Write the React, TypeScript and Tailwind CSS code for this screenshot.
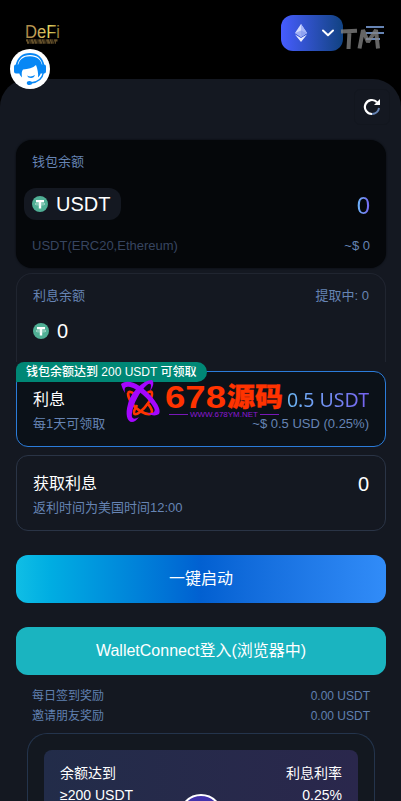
import type { ReactNode } from "react"

function TetherIcon() {
  return (
    <svg width="16" height="16" viewBox="0 0 16 16" className="shrink-0">
      <circle cx="8" cy="8" r="8" fill="#50af95" />
      <path d="M4 4h8v2.200H9.200v6.300H6.800V6.200H4z" fill="#fff" />
      <ellipse cx="8" cy="8" rx="5" ry="1" fill="none" stroke="#d5eee6" strokeWidth="0.6" />
    </svg>
  )
}

function SupportIcon() {
  return (
    <svg width="40" height="40" viewBox="0 0 40 40">
      <circle cx="20" cy="20" r="20" fill="#fff" />
      <path d="M6.500 17C7.500 9 13 5 20 5s12.500 4 13.500 12" fill="none" stroke="#0787f5" strokeWidth="1.800" />
      <path d="M4 17.500q0-2 2-2h3v9H6q-2 0-2-2zM36 17.500q0-2-2-2h-3v9h3q2 0 2-2z" fill="#0787f5" />
      <path d="M8 17C9 10.500 13 7.200 20 7.200s12 4 12 10.300c0 5-1 8-4 11 .500-4-.500-8.500-2-12.500-3 3-8 4-13 4.500-1.500 2-1.500 4-1 8C9 26 8 22 8 17z" fill="#0787f5" />
      <path d="M17 26.500q4 2 8-.500-1 3-4 3t-4-2.500z" fill="#0787f5" />
      <path d="M33.500 23c-1 6.500-5.500 10.500-13 11" fill="none" stroke="#0787f5" strokeWidth="1.500" />
      <ellipse cx="19.500" cy="34" rx="2.700" ry="2.100" fill="#0787f5" />
    </svg>
  )
}

function Logo() {
  return (
    <svg width="38" height="24" viewBox="0 0 38 24">
      <defs>
        <linearGradient id="gold" x1="0" y1="0" x2="1" y2="0">
          <stop offset="0" stopColor="#a88545" />
          <stop offset="0.35" stopColor="#c5a45a" />
          <stop offset="0.7" stopColor="#e6d75f" />
          <stop offset="1" stopColor="#8b7133" />
        </linearGradient>
      </defs>
      <text x="0" y="15" fontSize="18" textLength="35" lengthAdjust="spacingAndGlyphs" fill="url(#gold)">DeFi</text>
      <path d="M1 17.300h32M2 19.600h29" stroke="#a98749" strokeWidth="2.200" strokeDasharray="2 .6 1 .8 3 .5" opacity="0.6" />
    </svg>
  )
}

function Watermark() {
  return (
    <svg className="absolute left-[103px] top-[7px]" width="165" height="48" viewBox="0 0 165 48">
      <g fill="none" stroke="#ff3300" strokeWidth="2.600">
        <path d="M8 14C8 20 13 28 20 32s12 4 12 1-3-7-5-9" />
        <path d="M27 14c3-2 5-2 5 1 0 5-6 13-12 18-4 3-6 3-6 0 0-2 2-5 3-7" />
        <path d="M8 14c1-2 4-1 6 1" />
      </g>
      <g fill="#a406ff">
        <path d="M1 5C8-1 21 5 31 17c7 8 10 14 8 18-3 2-7 2-12-1 6 1 9-1 7-5C29 20 18 10 10 8 5 7 4 9 5 14 3 11 2 8 1 5z" />
        <path d="M32 1C23 1 11 13 8 25c-3 10-1 18 4 18 2 0 5-2 7-5-5 3-8 2-7-4C13 25 20 12 27 6c4-3 5 0 3 6 4-5 4-9 2-11z" />
      </g>
      <text x="45" y="28.500" fontSize="31" fontWeight="900" textLength="61" lengthAdjust="spacingAndGlyphs" fill="#ff3300">678</text>
      <text x="107" y="27" fontSize="26" fontWeight="900" textLength="56" lengthAdjust="spacingAndGlyphs" fill="#ff3300" stroke="#ff3300" strokeWidth="0.4">源码</text>
      <path d="M49 35.500h19M140 35.500h19" stroke="#7818b8" />
      <text x="70" y="38" fontSize="7.500" textLength="68" lengthAdjust="spacingAndGlyphs" fill="#8b18d3">WWW.678YM.NET</text>
    </svg>
  )
}

function RewardRow({ label, value }: { label: string; value: string }) {
  return (
    <div className="flex h-5 items-center justify-between text-xs text-[#6080b0]">
      <span>{label}</span>
      <span>{value}</span>
    </div>
  )
}

function Muted({ children }: { children: ReactNode }) {
  return <span className="text-[13px] leading-5 text-[#6684b4]">{children}</span>
}

export default function App() {
  return (
    <div className="h-[801px] w-full overflow-hidden bg-black font-['Liberation_Sans','Noto_Sans_CJK_SC',sans-serif]">
      <header className="relative flex h-[79px] items-start justify-between pl-[25px] pr-[17px] pt-[15px]">
        <div className="pt-2">
          <Logo />
        </div>
        <div className="flex items-center">
          <button className="flex h-9 w-[62px] items-center justify-between rounded-xl bg-linear-to-r from-[#465cff] to-[#104282] pl-[14px] pr-[9px]">
            <svg width="12" height="18" viewBox="0 0 12 18">
              <path d="M6 0L0 9l6 4 6-4z" fill="#d4dcff" />
              <path d="M6 0v13l6-4z" fill="#a6b7fa" />
              <path d="M0 10.500L6 18l6-7.500L6 14z" fill="#e9edff" />
              <path d="M0 9l6-2.500L12 9l-6 4z" fill="#8296ed" opacity="0.65" />
            </svg>
            <svg width="12" height="8" viewBox="0 0 12 8" fill="none">
              <path d="M1 1.500l5 4.700 5-4.700" stroke="#fff" strokeWidth="2" strokeLinecap="round" strokeLinejoin="round" />
            </svg>
          </button>
          <svg className="ml-[23px]" width="18" height="16" viewBox="0 0 18 16">
            <path d="M0 2h18M0 8h18M0 14h14" stroke="#6684b4" strokeWidth="1.800" />
          </svg>
        </div>
        <svg className="absolute left-[340px] top-[25px]" width="43" height="28" viewBox="0 0 43 28">
          <path d="M1 6.500l16-.700M9.500 6L8.500 24M19.500 23.500L23 5l5 12 8-12 2 18.500" fill="none" stroke="#858585" strokeOpacity="0.76" strokeWidth="4" strokeLinejoin="bevel" />
        </svg>
        <div className="absolute left-[10px] top-[49px] z-10">
          <SupportIcon />
        </div>
      </header>

      <main className="rounded-t-[28px] bg-[#141821] pl-4 pr-[15px] pt-2.5">
        <div className="-mr-1 flex h-[51px] justify-end">
          <button className="flex size-9 items-center justify-center rounded-md border border-[#12161e]">
            <svg width="18" height="18" viewBox="0 0 18 18" fill="none">
              <path d="M14 4.200A7 7 0 1 0 9 16" stroke="#fff" strokeWidth="2.200" />
              <path d="M9 16a7 7 0 0 0 7-6" stroke="#6684b4" strokeWidth="2" />
              <path d="M17 1v6h-6z" fill="#fff" />
            </svg>
          </button>
        </div>

        <section className="h-32 rounded-2xl bg-[#05070a] px-4 pt-3 shadow-[0_0_2px_#05070a]">
          <div className="flex h-5 items-center">
            <Muted>钱包余额</Muted>
          </div>
          <div className="mt-4 flex h-8 items-center justify-between">
            <div className="-ml-2 flex h-8 w-[97px] items-center gap-2 rounded-xl bg-[#141821] pl-2 text-xl text-white">
              <TetherIcon />
              USDT
            </div>
            <span className="bg-linear-to-r from-[#6bb8fa] to-[#7561ef] bg-clip-text pt-1 text-2xl leading-8 text-transparent">0</span>
          </div>
          <div className="mt-4 flex items-center justify-between">
            <span className="text-[13px] leading-5 text-[#374560]">USDT(ERC20,Ethereum)</span>
            <Muted>~$ 0</Muted>
          </div>
        </section>

        <section className="mt-[5px] h-[89px] rounded-t-2xl border border-b-0 border-[#202530] px-4 pt-3">
          <div className="flex items-center justify-between">
            <Muted>利息余额</Muted>
            <Muted>提取中: 0</Muted>
          </div>
          <div className="mt-[11px] flex h-7 items-center gap-2 text-xl text-white">
            <TetherIcon />
            0
          </div>
        </section>

        <section className="relative mt-[9px] h-[76px] rounded-xl border border-[#2b7cda] bg-[#0b1118] px-4 pt-[17px]">
          <div className="absolute -left-px -top-[10px] flex h-5 w-[191px] items-center rounded-r-[10px] rounded-tl-lg bg-[#008775] pl-2.5 text-xs font-medium text-white">
            钱包余额达到 200 USDT 可领取
          </div>
          <div className="flex h-[22px] items-center justify-between">
            <span className="text-base text-white">利息</span>
            <span className="bg-linear-to-r from-[#6bb8f5] to-[#7561ef] bg-clip-text font-['Noto_Sans'] text-[19.5px] leading-6 text-transparent">0.5 USDT</span>
          </div>
          <div className="mt-[3px] flex items-center justify-between">
            <Muted>每1天可领取</Muted>
            <Muted>~$ 0.5 USD (0.25%)</Muted>
          </div>
          <Watermark />
        </section>

        <section className="mt-2 h-[76px] rounded-xl border border-[#2a3446] px-4 pt-4">
          <div className="flex h-[23px] items-center justify-between text-white">
            <span className="text-base">获取利息</span>
            <span className="text-xl">0</span>
          </div>
          <div className="mt-[3px] flex">
            <Muted>返利时间为美国时间12:00</Muted>
          </div>
        </section>

        <button className="mt-6 h-12 w-full rounded-xl bg-linear-to-r from-[#10bee5] via-[#0260d1] to-[#318cf8] text-base text-white">
          一键启动
        </button>
        <button className="mt-6 h-12 w-full rounded-xl bg-[#1ab4c0] text-base text-white">
          WalletConnect登入(浏览器中)
        </button>

        <div className="px-4 pt-[11px]">
          <RewardRow label="每日签到奖励" value="0.00 USDT" />
          <RewardRow label="邀请朋友奖励" value="0.00 USDT" />
        </div>

        <section className="mx-[11px] mt-[7px] h-24 rounded-t-[20px] border border-b-0 border-[#24344c] bg-[#131820] p-4">
          <div className="relative h-20 rounded-t-lg bg-linear-to-r from-[#222c49] to-[#2a274c] px-4 pt-3 text-sm leading-[22px] text-white">
            <div className="flex justify-between">
              <span>余额达到</span>
              <span>利息利率</span>
            </div>
            <div className="flex justify-between">
              <span>≥200 USDT</span>
              <span>0.25%</span>
            </div>
            <div className="absolute left-1/2 top-11 size-11 -translate-x-1/2 rounded-full border-2 border-white bg-[#4132aa]" />
          </div>
        </section>
      </main>
    </div>
  )
}
